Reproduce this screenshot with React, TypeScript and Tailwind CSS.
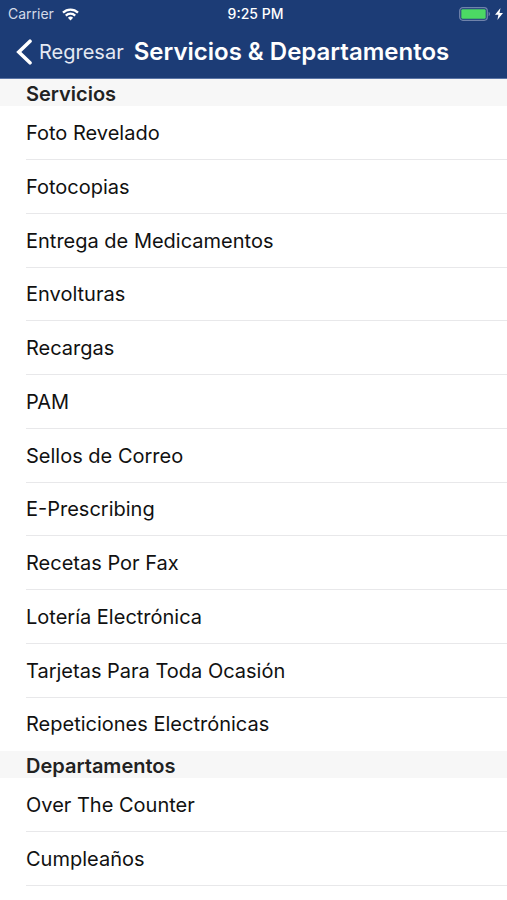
const sections = [
  {
    title: "Servicios",
    items: [
      "Foto Revelado",
      "Fotocopias",
      "Entrega de Medicamentos",
      "Envolturas",
      "Recargas",
      "PAM",
      "Sellos de Correo",
      "E-Prescribing",
      "Recetas Por Fax",
      "Lotería Electrónica",
      "Tarjetas Para Toda Ocasión",
      "Repeticiones Electrónicas",
    ],
  },
  { title: "Departamentos", items: ["Over The Counter", "Cumpleaños"] },
];

/* ─── Status bar ───────────────────────────────── */
function StatusBar() {
  return (
    <div className="grid h-7 grid-cols-3 items-center pl-2 pr-1 text-[14px] leading-4">
      <div className="flex items-center gap-2">
        <span className="text-[#d3dae8]">Carrier</span>
        <svg width="17" height="13" viewBox="0 0 17 13" fill="none" stroke="#fff" strokeWidth="2.3">
          <path d="M1 4.6a10.8 10.8 0 0 1 15 0" />
          <path d="M3.8 7.6a6.8 6.8 0 0 1 9.4 0" />
          <path d="M8.5 12.4 5.9 9.8a3.8 3.8 0 0 1 5.2 0z" fill="#fff" stroke="none" />
        </svg>
      </div>
      <span className="text-center font-medium">9:25 PM</span>
      <div className="flex items-center justify-end gap-1">
        <svg width="32" height="14" viewBox="0 0 32 14">
          <rect x="0.7" y="0.7" width="27.6" height="12.6" rx="3.2" fill="none" stroke="#7083ab" strokeWidth="1.3" />
          <rect x="2.3" y="2.3" width="24.4" height="9.4" rx="1.2" fill="#4cd964" />
          <path d="M29.6 4.8c1.9.8 1.9 3.6 0 4.4z" fill="#7083ab" />
        </svg>
        <svg width="8" height="12" viewBox="0 0 8 12" fill="#fff">
          <path d="M5.5 0 0 6.8h3.4L2.4 12 8 5H4.5z" />
        </svg>
      </div>
    </div>
  );
}

/* ─── Nav bar ──────────────────────────────────── */
function NavBar() {
  return (
    <div className="flex h-[51px] items-center border-b border-[#5a74a5] pb-[2px] pl-4">
      <button type="button" className="flex items-center gap-[7px] text-[20px] leading-6 text-[#e4e9f3]">
        <svg width="16" height="26" viewBox="0 0 16 26" fill="none" stroke="#fff" strokeWidth="3.6" strokeLinecap="round">
          <path d="M14 2.2 2.8 13 14 23.8" />
        </svg>
        Regresar
      </button>
      <h1 className="ml-[10px] whitespace-nowrap text-[24px] font-semibold leading-6">Servicios &amp; Departamentos</h1>
    </div>
  );
}

/* ─── Grouped list ─────────────────────────────── */
function Section({ title, items }: { title: string; items: string[] }) {
  return (
    <section className="group">
      <h2 className="bg-[#f7f7f7] px-[26px] pt-[3px] text-[20px] font-semibold leading-6 text-[#222]">{title}</h2>
      <ul className="pl-[26px]">
        {items.map((item) => (
          <li
            key={item}
            className="flex h-[54px] items-center border-b border-[#e8e8ea] text-[20px] leading-6 nth-[4n]:h-[53px] last:border-transparent group-last:last:border-[#e8e8ea]"
          >
            {item}
          </li>
        ))}
      </ul>
    </section>
  );
}

export default function App() {
  return (
    <div className="min-h-screen bg-white font-['Inter',sans-serif] text-[#111]">
      <header className="bg-[#1c3c76] text-white">
        <StatusBar />
        <NavBar />
      </header>
      <main>
        {sections.map((s) => (
          <Section key={s.title} title={s.title} items={s.items} />
        ))}
      </main>
    </div>
  );
}
